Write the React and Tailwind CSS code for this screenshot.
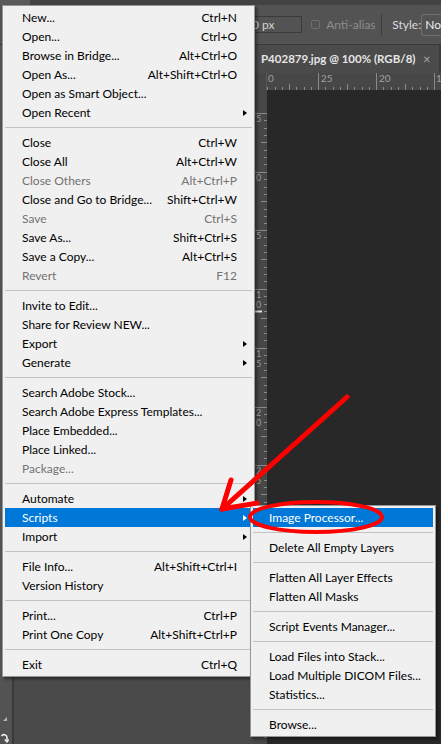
import React from 'react'

const fileMenu = [
  { label: 'New...', keys: 'Ctrl+N' },
  { label: 'Open...', keys: 'Ctrl+O' },
  { label: 'Browse in Bridge...', keys: 'Alt+Ctrl+O' },
  { label: 'Open As...', keys: 'Alt+Shift+Ctrl+O' },
  { label: 'Open as Smart Object...' },
  { label: 'Open Recent', sub: true },
  'sep',
  { label: 'Close', keys: 'Ctrl+W' },
  { label: 'Close All', keys: 'Alt+Ctrl+W' },
  { label: 'Close Others', keys: 'Alt+Ctrl+P', disabled: true },
  { label: 'Close and Go to Bridge...', keys: 'Shift+Ctrl+W' },
  { label: 'Save', keys: 'Ctrl+S', disabled: true },
  { label: 'Save As...', keys: 'Shift+Ctrl+S' },
  { label: 'Save a Copy...', keys: 'Alt+Ctrl+S' },
  { label: 'Revert', keys: 'F12', disabled: true },
  'sep',
  { label: 'Invite to Edit...' },
  { label: 'Share for Review NEW...' },
  { label: 'Export', sub: true },
  { label: 'Generate', sub: true },
  'sep',
  { label: 'Search Adobe Stock...' },
  { label: 'Search Adobe Express Templates...' },
  { label: 'Place Embedded...' },
  { label: 'Place Linked...' },
  { label: 'Package...', disabled: true },
  'sep',
  { label: 'Automate', sub: true },
  { label: 'Scripts', sub: true, active: true },
  { label: 'Import', sub: true },
  'sep',
  { label: 'File Info...', keys: 'Alt+Shift+Ctrl+I' },
  { label: 'Version History' },
  'sep',
  { label: 'Print...', keys: 'Ctrl+P' },
  { label: 'Print One Copy', keys: 'Alt+Shift+Ctrl+P' },
  'sep',
  { label: 'Exit', keys: 'Ctrl+Q' },
]

const scriptsMenu = [
  { label: 'Image Processor...', active: true },
  'sep',
  { label: 'Delete All Empty Layers' },
  'sep',
  { label: 'Flatten All Layer Effects' },
  { label: 'Flatten All Masks' },
  'sep',
  { label: 'Script Events Manager...' },
  'sep',
  { label: 'Load Files into Stack...' },
  { label: 'Load Multiple DICOM Files...' },
  { label: 'Statistics...' },
  'sep',
  { label: 'Browse...' },
]

function Separator() {
  return (
    <div className="h-[11px] mx-[2px] flex items-center">
      <div className="h-px w-full bg-[#c2c2c2]" />
    </div>
  )
}

function MenuRow({ item, submenu }) {
  const color = item.active ? 'bg-[#0078d7] text-white' : item.disabled ? 'text-[#737373]' : 'text-black'
  return (
    <div className={`h-[19px] mx-[2px] flex items-center whitespace-nowrap ${submenu ? 'pl-[16px]' : 'pl-[17px] pr-[5px]'} ${color}`}>
      <span className="flex-1">{item.label}</span>
      {!submenu && item.keys && <span>{item.keys}</span>}
      {!submenu && (
        <span className="w-[10px] flex justify-end">
          {item.sub && (
            <span
              className={`w-0 h-0 border-y-[3.5px] border-y-transparent border-l-[4px] ${item.active ? 'border-l-white' : 'border-l-black'}`}
            />
          )}
        </span>
      )}
    </div>
  )
}

function Menu({ items, submenu, className }) {
  return (
    <div className={`absolute bg-[#f0f0f0] border border-[#979797] py-[2px] text-[12px] font-['Lato',sans-serif] shadow-[2px_2px_3px_rgba(0,0,0,0.45)] ${className}`}>
      {items.map((it, i) => (it === 'sep' ? <Separator key={i} /> : <MenuRow key={i} item={it} submenu={submenu} />))}
    </div>
  )
}

function HRuler() {
  const majors = [-7, 51, 109, 167]
  const labels = ['0', '25', '20', '1']
  const lx = [1, 54, 112, 169]
  return (
    <svg width="174" height="17" className="block">
      {majors.map((x, i) => (
        <g key={i}>
          <line x1={x + 0.5} y1="0" x2={x + 0.5} y2="17" stroke="#8a8a8a" />
          {[1, 2, 3, 4, 5, 6, 7].map(j => {
            const tx = Math.round(x + j * 7.25) + 0.5
            return <line key={j} x1={tx} y1={j === 4 ? 11 : 14} x2={tx} y2="17" stroke="#8a8a8a" />
          })}
          <text x={lx[i]} y="9" fontSize="10" fill="#a0a0a0" fontFamily="Lato, sans-serif">{labels[i]}</text>
        </g>
      ))}
    </svg>
  )
}

function VRuler() {
  const labels = ['5', '0', '5', '10', '15', '20', '25', '30', '35', '40', '45']
  return (
    <svg width="13" height="654" className="block">
      {labels.map((lab, i) => {
        const y = Math.round(23 + i * 58.7)
        return (
          <g key={i}>
            <line x1="0" y1={y + 0.5} x2="13" y2={y + 0.5} stroke="#8a8a8a" />
            {[1, 2, 3, 4, 5, 6, 7].map(j => {
              const ty = Math.round(y + j * 7.33) + 0.5
              return <line key={j} x1={j === 4 ? 7 : 10} y1={ty} x2="13" y2={ty} stroke="#8a8a8a" />
            })}
            {lab.split('').map((d, k) => (
              <text key={k} x="2" y={y + 9 + k * 10} fontSize="9" fill="#a0a0a0" fontFamily="Lato, sans-serif">{d}</text>
            ))}
          </g>
        )
      })}
      <line x1="0" y1="221.5" x2="8" y2="221.5" stroke="#e0e0e0" strokeWidth="2" />
    </svg>
  )
}

export default function App() {
  return (
    <div className="relative w-[441px] h-[744px] overflow-hidden bg-[#282828] font-['Lato',sans-serif] flex flex-col">
      {/* app menu bar */}
      <div className="h-[5px] flex bg-[#424242]">
        <div className="w-[30px] bg-[#5a5a5a]" />
      </div>

      {/* options bar */}
      <div className="h-[39px] bg-[#535353] flex items-center text-[12px]">
        <div className="ml-[243px] w-[60px] h-[17px] border border-[#3a3a3a] flex items-center pl-[8px] text-[#d6d6d6]">0 px</div>
        <div className="ml-[9px] w-[9px] h-[9px] border border-[#6e6e6e] rounded-[2px]" />
        <div className="ml-[6px] w-[56px] text-[#8e8e8e]">Anti-alias</div>
        <div className="w-px h-[22px] bg-[#3d3d3d]" />
        <div className="ml-[10px] w-[29px] text-[#dadada]">Style:</div>
        <div className="flex-1 h-[22px] border border-[#707070] border-r-0 rounded-l-[3px] flex items-center pl-[3px] text-[#e8eef8] whitespace-nowrap">No</div>
      </div>
      <div className="h-px bg-[#383838]" />

      <div className="flex-1 flex">
        {/* tools + left area */}
        <div className="w-[254px] flex">
          <div className="w-[12px] bg-[#535353] flex flex-col justify-end items-start pb-[1px]">
            <div className="ml-[3px] mb-[12px] w-0 h-0 border-t-[4px] border-t-transparent border-r-[4px] border-r-[#b5b5b5]" />
            <svg width="9" height="10" viewBox="0 0 9 10">
              <path d="M1.5 3 A3 3 0 0 1 7 4.5 L7 8" fill="none" stroke="#eeeeee" strokeWidth="1.6" />
              <path d="M4.8 6.5 L7 9 L9 6.5" fill="none" stroke="#eeeeee" strokeWidth="1.4" />
            </svg>
          </div>
          <div className="w-[2px] bg-[#393939]" />
          <div className="flex-1 bg-[#4a4a4a]" />
        </div>

        {/* document */}
        <div className="flex-1 flex flex-col">
          <div className="h-[28px] flex bg-[#3c3c3c]">
            <div className="w-[185px] bg-[#4b4b4b] flex items-center pl-[7px]">
              <span className="w-[162px] text-[11.5px] font-bold text-[#e6e6e6] whitespace-nowrap">P402879.jpg @ 100% (RGB/8)</span>
              <span className="text-[13px] text-[#a8a8a8] leading-none">×</span>
            </div>
          </div>
          <div className="h-[17px] flex bg-[#474747]">
            <div className="w-[13px] border-r border-[#5a5a5a]" />
            <div className="flex-1 overflow-hidden">
              <HRuler />
            </div>
          </div>
          <div className="flex-1 flex">
            <div className="w-[13px] bg-[#474747] overflow-hidden">
              <VRuler />
            </div>
            <div className="flex-1 bg-[#282828]" />
          </div>
        </div>
      </div>

      <Menu items={fileMenu} className="left-[2px] top-[5px] w-[253px]" />
      <Menu items={scriptsMenu} submenu className="left-[250px] top-[505px] w-[186px]" />

      {/* red annotations */}
      <svg className="absolute inset-0 pointer-events-none" width="441" height="744">
        <g stroke="#ff0000" strokeWidth="5" strokeLinecap="round" fill="none">
          <line x1="347" y1="397" x2="222" y2="509" />
          <line x1="222" y1="509" x2="231" y2="480" />
          <line x1="222" y1="509" x2="257" y2="503" />
        </g>
        <ellipse cx="316" cy="517" rx="66" ry="15" stroke="#ff0000" strokeWidth="4" fill="none" />
      </svg>
    </div>
  )
}
